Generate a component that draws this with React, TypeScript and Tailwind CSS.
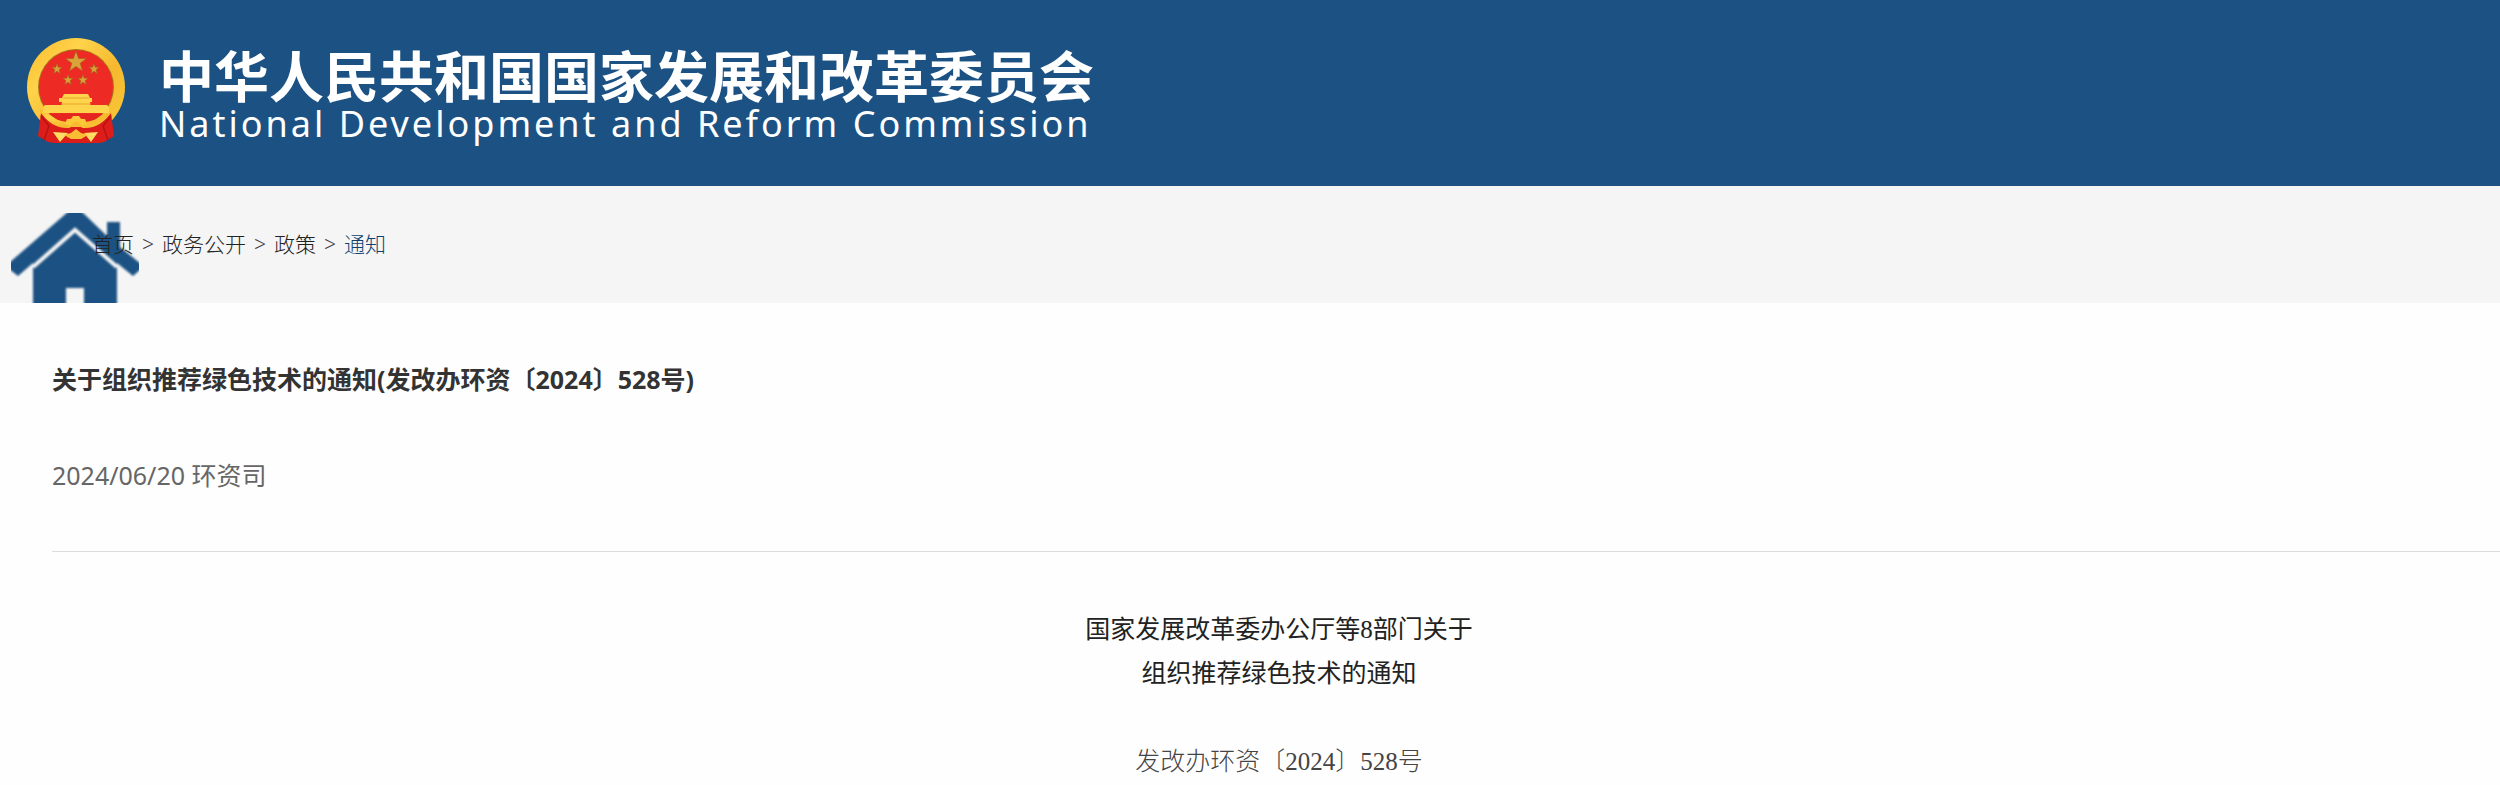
import React from 'react';

const NAV_ITEMS = ['首页', '政务公开', '政策'];

const STARS = [
  { x: 49, y: 24, r: 11 },
  { x: 30, y: 31, r: 5.5 },
  { x: 67, y: 31, r: 5.5 },
  { x: 41, y: 42, r: 5.5 },
  { x: 56, y: 42, r: 5.5 },
];

const starPoints = (x: number, y: number, r: number) =>
  Array.from({ length: 10 }, (_, i) => {
    const radius = i % 2 === 0 ? r : r * 0.4;
    const angle = (Math.PI / 5) * i - Math.PI / 2;
    return `${(x + radius * Math.cos(angle)).toFixed(2)},${(y + radius * Math.sin(angle)).toFixed(2)}`;
  }).join(' ');

const Emblem: React.FC = () => (
  <svg viewBox="0 0 98 106" className="w-[98px] h-[106px] shrink-0" aria-hidden="true">
    <defs>
      <linearGradient id="gold" x1="0" y1="0" x2="1" y2="1">
        <stop offset="0" stopColor="#fbb92c" />
        <stop offset="0.3" stopColor="#ffd34a" />
        <stop offset="0.6" stopColor="#f5b82e" />
        <stop offset="1" stopColor="#fccb3c" />
      </linearGradient>
    </defs>
    <circle cx="49" cy="49" r="49" fill="url(#gold)" />
    <circle cx="49" cy="49" r="38" fill="#a8761c" />
    <circle cx="49" cy="49" r="37" fill="#ee2a24" />
    {/* ribbons */}
    <path d="M14 75 L11 98 L21 104 L27 105 L72 105 L77 104 L87 98 L84 75 Q72 86 60 89 L38 89 Q24 86 14 75 Z" fill="#dc1d19" />
    <path d="M14 78 L22 88 L17 102 M84 78 L76 88 L81 102" fill="none" stroke="#b81214" strokeWidth="1.5" />
    {/* lower part of the wreath and the gear */}
    <path d="M12 72 Q24 91 42 90 L49 87 L56 90 Q74 91 86 72 L80 73 Q70 83 58 84 L40 84 Q28 83 18 73 Z" fill="url(#gold)" />
    <path d="M22 76 H76 L67 82 L59 83 Q56 78 49 78 Q42 78 39 83 L31 82 Z" fill="#e52520" />
    <path d="M38 86 L40 81 L44 81 L46 78 L52 78 L54 81 L58 81 L60 86 L55 88 L51 84 L47 84 L43 88 Z" fill="#fdc93a" />
    <path d="M26 94 L41 95 L33 104 Z M71 94 L57 95 L64 104 Z" fill="#ffdc62" />
    <path d="M37 97 L44 95 L49 91 L54 95 L61 97 L54 101 L44 101 Z" fill="#f9be34" />
    {/* gate tower */}
    <path d="M37 56 H61 L63 60 H65 V64 H63 V67 H80 L82 69 V75 H16 V69 L18 67 H35 V64 H32 V60 H35 Z" fill="#fdd44b" />
    <path d="M36 60 H62 M34 66 H64" stroke="#e8a52c" strokeWidth="1" />
    {STARS.map((star) => (
      <polygon key={`${star.x}-${star.y}`} points={starPoints(star.x, star.y, star.r)} fill="#d9a23a" stroke="#a3601c" strokeWidth="0.6" />
    ))}
  </svg>
);

const HouseIcon: React.FC = () => (
  <svg viewBox="0 0 128 90" className="absolute left-[11px] bottom-0 w-32 h-[90px] overflow-hidden" aria-hidden="true">
    <g className="blur-[1px]">
      <path d="M58 -2 H70 L96 23 V9 H109 V34 L130 51 V56 L122 63 L106 50 V94 H73 V75 H55 V94 H22 V50 L7 63 L-2 56 V50 Z" fill="#1c5283" />
      <path d="M22 54 L64 17 L106 54" fill="none" stroke="#f5f5f5" strokeWidth="4" />
    </g>
  </svg>
);

const App: React.FC = () => {
  return (
    <div className="min-h-screen overflow-x-hidden bg-[#fefefe] text-[#333333] font-['Noto_Sans','Noto_Sans_CJK_SC',sans-serif]">
      <header className="flex h-[186px] items-start bg-[#1c5283] pl-[27px] pt-[38px] text-white">
        <Emblem />
        <div className="ml-[34px] pt-2 whitespace-nowrap">
          <p className="text-[55px] leading-[60px] font-bold">中华人民共和国国家发展和改革委员会</p>
          <p className="text-[36px] leading-9 tracking-[3px]">National Development and Reform Commission</p>
        </div>
      </header>

      <nav aria-label="当前位置" className="relative h-[117px] bg-[#f5f5f5]">
        <HouseIcon />
        <ol className="relative flex h-full items-center gap-2 pl-[92px] text-[21px] font-light text-[#222222]">
          {NAV_ITEMS.map((item) => (
            <li key={item} className="flex gap-2">
              <a href="#">{item}</a>
              <span className="text-[#444444]">&gt;</span>
            </li>
          ))}
          <li>
            <a href="#" className="text-[#0f4272]">通知</a>
          </li>
        </ol>
      </nav>

      <main className="pl-[52px]">
        <h1 className="pt-14 text-[25px] leading-10 font-bold">关于组织推荐绿色技术的通知(发改办环资〔2024〕528号)</h1>
        <p className="py-14 text-[25px] leading-10 text-[#666666] border-b border-[#dcdcdc]">2024/06/20 环资司</p>
        <article className="pt-14 pl-[6px] text-center text-[25px] leading-[44px] font-['Liberation_Serif','Noto_Sans_CJK_SC',serif]">
          <h2 className="font-normal text-[#222222]">
            国家发展改革委办公厅等8部门关于
            <br />
            组织推荐绿色技术的通知
          </h2>
          <p className="pt-11 font-light text-[#444444]">发改办环资〔2024〕528号</p>
        </article>
      </main>
    </div>
  );
};

export default App;
